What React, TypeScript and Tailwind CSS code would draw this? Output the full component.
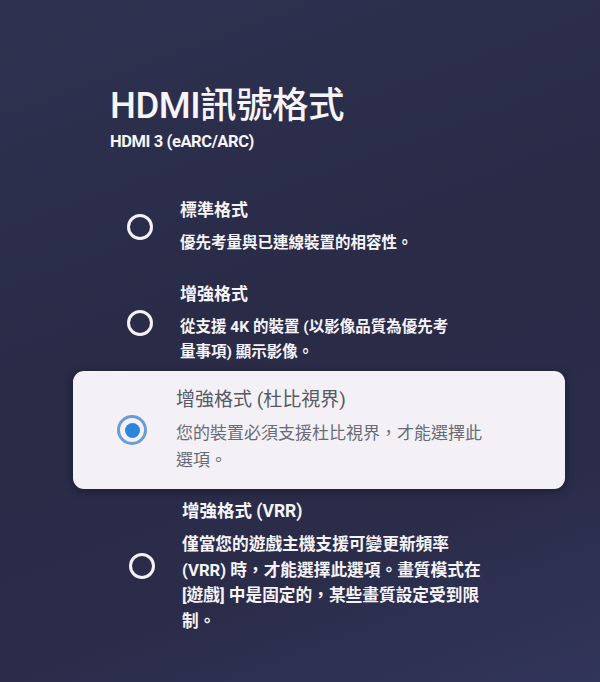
import React from 'react';

interface Option {
  id: string;
  title: string;
  lines: string[];
}

const options: Option[] = [
  { id: 'std', title: '標準格式', lines: ['優先考量與已連線裝置的相容性。'] },
  { id: 'enh', title: '增強格式', lines: ['從支援 4K 的裝置 (以影像品質為優先考', '量事項) 顯示影像。'] },
  { id: 'dv', title: '增強格式 (杜比視界)', lines: ['您的裝置必須支援杜比視界，才能選擇此', '選項。'] },
  {
    id: 'vrr',
    title: '增強格式 (VRR)',
    lines: ['僅當您的遊戲主機支援可變更新頻率', '(VRR) 時，才能選擇此選項。畫質模式在', '[遊戲] 中是固定的，某些畫質設定受到限', '制。'],
  },
];

const font = { fontFamily: 'Roboto, "Noto Sans CJK TC", sans-serif' };

function Row({ opt, className, big }: { opt: Option; className: string; big?: boolean }) {
  return (
    <div className={`flex items-center ${className}`}>
      <div className="w-[26px] h-[26px] rounded-full border-[3px] border-[#f4f2f6] shrink-0" />
      <div className="ml-[27px] text-[#f6f4f8] font-bold">
        <div className={big ? 'text-[17.5px] leading-[26px]' : 'text-[17px] leading-[26px]'}>{opt.title}</div>
        <div className={big ? 'mt-[8px] text-[16.7px] leading-[25.5px]' : 'mt-[8px] text-[15.5px] leading-[25px]'}>
          {opt.lines.map((l) => (
            <div key={l}>{l}</div>
          ))}
        </div>
      </div>
    </div>
  );
}

function SelectedCard({ opt }: { opt: Option }) {
  return (
    <div className="mt-[6px] ml-[73px] w-[492px] h-[118px] rounded-[11px] bg-[#f3f1f5] shadow-[0_2px_10px_rgba(0,0,0,0.35)] flex items-center pl-[44px]">
      <div className="w-[30px] h-[30px] rounded-full border-[3px] border-[#6c9bd6] flex items-center justify-center shrink-0">
        <div className="w-[15px] h-[15px] rounded-full bg-[#2d84dc]" />
      </div>
      <div className="ml-[29px]">
        <div className="text-[19px] leading-[28px] text-[#565866]">{opt.title}</div>
        <div className="mt-[6px] text-[17px] leading-[27px] text-[#6a6b78]">
          {opt.lines.map((l) => (
            <div key={l}>{l}</div>
          ))}
        </div>
      </div>
    </div>
  );
}

export default function App() {
  return (
    <div
      className="w-[600px] h-[682px] overflow-hidden bg-[linear-gradient(160deg,#2e3250_0%,#292b47_45%,#2a2c49_75%,#31355a_100%)]"
      style={font}
    >
      <div className="pt-[81px] pl-[110px] text-[#f7f5f9]">
        <h1 className="text-[36.5px] leading-[49px] font-medium tracking-[-0.5px]">HDMI訊號格式</h1>
        <div className="mt-[1px] text-[16.5px] leading-[22px] font-bold tracking-[-0.4px]">HDMI 3 (eARC/ARC)</div>
      </div>

      <Row opt={options[0]} className="mt-[44px] ml-[127px]" />
      <Row opt={options[1]} className="mt-[25px] ml-[127px]" />
      <SelectedCard opt={options[2]} />
      <Row opt={options[3]} className="mt-[9px] ml-[129px]" big />
    </div>
  );
}
